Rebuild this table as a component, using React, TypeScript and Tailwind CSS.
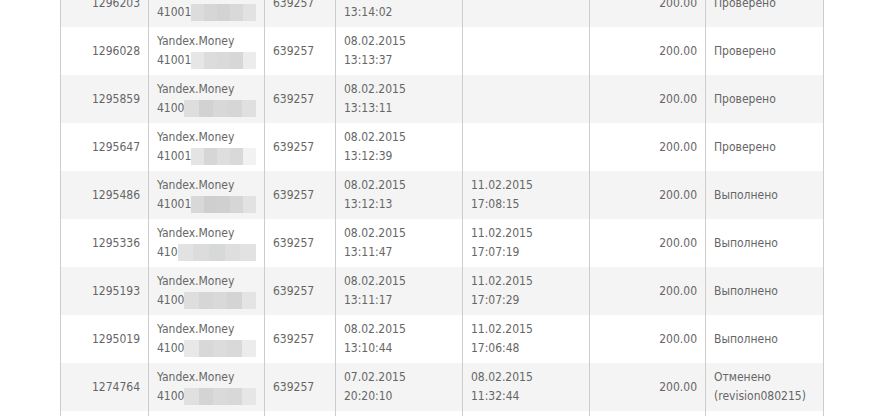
import React from "react";

type Row = {
  id: string;
  acc: string;
  blurW: number;
  shades: string[];
  code: string;
  d1: [string, string];
  d2?: [string, string];
  amount: string;
  status: string[];
};

const rows: Row[] = [
  { id: "1296203", acc: "41001", blurW: 70, shades: ["#dcdcdc", "#d6d6d6", "#d3d3d3", "#d9d9d9", "#e2e2e2"], code: "639257", d1: ["08.02.2015", "13:14:02"], amount: "200.00", status: ["Проверено"] },
  { id: "1296028", acc: "41001", blurW: 73, shades: ["#e6e6e6", "#dcdcdc", "#dadada", "#d7d7d7", "#ececec"], code: "639257", d1: ["08.02.2015", "13:13:37"], amount: "200.00", status: ["Проверено"] },
  { id: "1295859", acc: "4100", blurW: 75, shades: ["#dedede", "#d2d2d2", "#d8d8d8", "#d6d6d6", "#e0e0e0"], code: "639257", d1: ["08.02.2015", "13:13:11"], amount: "200.00", status: ["Проверено"] },
  { id: "1295647", acc: "41001", blurW: 73, shades: ["#e4e4e4", "#d6d6d6", "#dedede", "#d9d9d9", "#f2f2f2"], code: "639257", d1: ["08.02.2015", "13:12:39"], amount: "200.00", status: ["Проверено"] },
  { id: "1295486", acc: "41001", blurW: 73, shades: ["#d8d8d8", "#cfcfcf", "#d0d0d0", "#d6d6d6", "#e2e2e2"], code: "639257", d1: ["08.02.2015", "13:12:13"], d2: ["11.02.2015", "17:08:15"], amount: "200.00", status: ["Выполнено"] },
  { id: "1295336", acc: "410", blurW: 81, shades: ["#e2e2e2", "#dcdcdc", "#d7d9d8", "#dedede", "#e2e2e2"], code: "639257", d1: ["08.02.2015", "13:11:47"], d2: ["11.02.2015", "17:07:19"], amount: "200.00", status: ["Выполнено"] },
  { id: "1295193", acc: "4100", blurW: 76, shades: ["#dedede", "#d6d6d6", "#d9d9d9", "#d4d4d4", "#e4e4e4"], code: "639257", d1: ["08.02.2015", "13:11:17"], d2: ["11.02.2015", "17:07:29"], amount: "200.00", status: ["Выполнено"] },
  { id: "1295019", acc: "4100", blurW: 81, shades: ["#e8e8e8", "#d8d8d8", "#dcdcdc", "#d9d9d9", "#ececec"], code: "639257", d1: ["08.02.2015", "13:10:44"], d2: ["11.02.2015", "17:06:48"], amount: "200.00", status: ["Выполнено"] },
  { id: "1274764", acc: "4100", blurW: 82, shades: ["#e0e0e0", "#d4d4d4", "#dadada", "#d8d8d8", "#e6e6e6"], code: "639257", d1: ["07.02.2015", "20:20:10"], d2: ["08.02.2015", "11:32:44"], amount: "200.00", status: ["Отменено", "(revision080215)"] },
];

function Blur({ w, shades }: { w: number; shades: string[] }) {
  return (
    <span className="inline-flex h-[17px] align-middle" style={{ width: w }}>
      {shades.map((c, i) => (
        <span key={i} className="flex-1 h-full" style={{ backgroundColor: c }} />
      ))}
    </span>
  );
}

const cell = "border-l border-[#cccccc] px-2 flex flex-col justify-center leading-[19px]";

export default function App() {
  return (
    <div
      className="w-[891px] h-[416px] overflow-hidden bg-white text-[#666666] text-[12px]"
      style={{ fontFamily: '"DejaVu Sans Condensed", "DejaVu Sans", sans-serif' }}
    >
      <div className="ml-[60px] mt-[-21px] w-[764px]">
        {rows.map((r, i) => (
          <div
            key={r.id}
            className={`grid grid-cols-[88px_116px_71px_127px_127px_116px_119px] h-[48px] ${i % 2 === 0 ? "bg-[#f4f4f4]" : "bg-white"}`}
          >
            <div className={`${cell} items-end`}>{r.id}</div>
            <div className={cell}>
              <div>Yandex.Money</div>
              <div className="flex items-center whitespace-nowrap">
                <span>{r.acc}</span>
                <Blur w={r.blurW} shades={r.shades} />
              </div>
            </div>
            <div className={cell}>{r.code}</div>
            <div className={cell}>
              <div>{r.d1[0]}</div>
              <div>{r.d1[1]}</div>
            </div>
            <div className={cell}>
              {r.d2 ? (
                <>
                  <div>{r.d2[0]}</div>
                  <div>{r.d2[1]}</div>
                </>
              ) : null}
            </div>
            <div className={`${cell} items-end`}>{r.amount}</div>
            <div className={`${cell} border-r`}>
              {r.status.map((s) => (
                <div key={s}>{s}</div>
              ))}
            </div>
          </div>
        ))}
        <div className="grid grid-cols-[88px_116px_71px_127px_127px_116px_119px] h-[48px] bg-white">
          <div className="border-l border-[#cccccc]" />
          <div className="border-l border-[#cccccc]" />
          <div className="border-l border-[#cccccc]" />
          <div className="border-l border-[#cccccc]" />
          <div className="border-l border-[#cccccc]" />
          <div className="border-l border-[#cccccc]" />
          <div className="border-l border-r border-[#cccccc]" />
        </div>
      </div>
    </div>
  );
}
